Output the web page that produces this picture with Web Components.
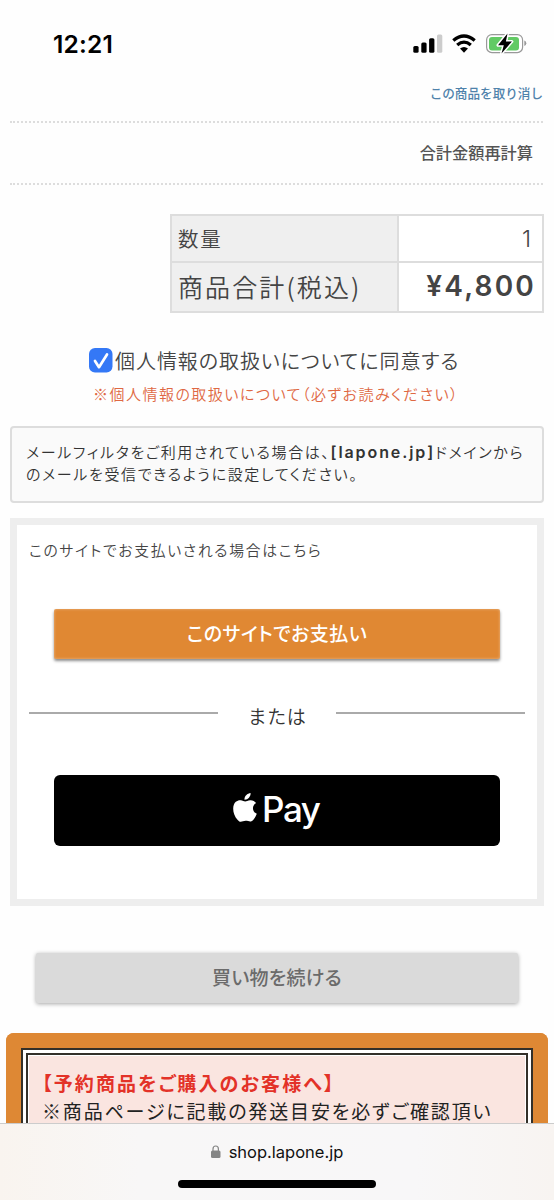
<!DOCTYPE html>
<html lang="ja"><head><meta charset="utf-8"><title>shop.lapone.jp</title>
<style>html,body{margin:0;background:#fefefe}body{font-family:Inter,"Noto Sans CJK JP",sans-serif}</style></head>
<body><checkout-page></checkout-page>
<script>
const define=(name,css,html)=>customElements.define(name,class extends HTMLElement{
  constructor(){super();this.attachShadow({mode:'open'}).innerHTML=`<style>*{box-sizing:border-box}:host{display:block;box-sizing:border-box}${css}</style>${html}`;}
});
define('status-bar',`:host{height:75px;display:flex;align-items:flex-start;justify-content:space-between;padding:29px 27px 0 53px;color:#000}
time{font:600 24.5px/30px Inter,sans-serif;letter-spacing:.2px}svg{display:block;margin-top:2px}`,
`<time>12:21</time><svg width="114" height="26" viewBox="413 31 114 26">
<rect x="413.300" y="46" width="5.300" height="6.700" rx="1.500"/><rect x="421.300" y="42.500" width="5.300" height="10.200" rx="1.500"/><rect x="429.100" y="38.300" width="5.300" height="14.400" rx="1.500"/><rect x="437" y="34.500" width="5.300" height="18.200" rx="1.500" fill="#ccc"/>
<path d="M453.300 40.500Q464 31.500 474.700 40.500M457.200 45Q464 39.300 470.800 45" fill="none" stroke="#000" stroke-width="3.300"/><path d="M460 48.500Q464 45.500 468 48.500L464 52.700Z"/>
<rect x="486.600" y="34.600" width="36" height="18" rx="5.300" fill="#fff" stroke="#999" stroke-width="1.200"/><rect x="489" y="37" width="30" height="13.400" rx="3" fill="#62ca64"/><path d="M524.300 40.600v5.400q2-.7 2-2.700t-2-2.700" fill="#999"/>
<path d="M507.500 33.500 498 45.300h5.800L501.500 53.500 511.900 41.600h-6Z" stroke="#fff" stroke-width="3" paint-order="stroke" stroke-linejoin="round"/></svg>`);
define('cart-actions',`:host{margin:0 11px 0 10px}.c{height:48px;border-bottom:2px dotted #ddd;text-align:right;font:500 12.600px/36px "Noto Sans CJK JP",sans-serif;color:#4f82ab;white-space:nowrap}
.r{height:62px;border-bottom:2px dotted #ddd;text-align:right;padding-right:10px;font:500 16.200px/58px "Noto Sans CJK JP",sans-serif;color:#555}`,
`<div class="c">この商品を取り消し</div><div class="r">合計金額再計算</div>`);
define('totals-table',`:host{margin:29px 10px 0 170px;height:99px;border:2px solid #ddd;display:grid;grid-template-columns:225px 1fr;grid-template-rows:45px 1fr;gap:2px;background:#ddd;color:#444;font:350 20.500px/45px Inter,"Noto Sans CJK JP",sans-serif}
div{background:#fff;padding:0 9px 0 6px}.l{background:#efefef;font-family:"Noto Sans CJK JP",sans-serif;letter-spacing:1.800px}.v{text-align:right}.b{font-size:25px;line-height:46px;letter-spacing:2.100px}.v.b{font:600 28px/47px Inter,sans-serif;letter-spacing:2.200px;padding-right:6px}.one{font-size:23px;padding-right:11px;line-height:47px}`,
`<div class="l">数量</div><div class="v one">1</div><div class="l b">商品合計(税込)</div><div class="v b">¥4,800</div>`);
define('privacy-consent',`:host{display:flex;flex-direction:column;height:113px;padding-top:34px;color:#444;font-family:"Noto Sans CJK JP",sans-serif;font-weight:350}
.a{display:flex;margin-left:89px;gap:2px;height:29px;font-size:20px;line-height:28px;letter-spacing:.950px;font-feature-settings:"palt";white-space:nowrap}svg{flex:none;display:block;margin-top:1px}
.n{margin:6px 0 0 93px;font-size:15px;line-height:24px;letter-spacing:1.480px;color:#df6843;font-feature-settings:"palt";white-space:nowrap}`,
`<div class="a"><svg width="24" height="25"><rect width="23.500" height="24.500" rx="6" fill="#3478f6"/><path d="m6 13 4 6.200L18 6.500" fill="none" stroke="#fff" stroke-width="2.700" stroke-linecap="round" stroke-linejoin="round"/></svg><span>個人情報の取扱いについてに同意する</span></div><div class="n">※個人情報の取扱いについて（必ずお読みください）</div>`);
define('mail-notice',`:host{margin:0 10px 0 10px;height:77px;border:2px solid #ddd;border-radius:4px;background:#fafafa;padding:13px 0 0 14px;font:350 15px/22px "Noto Sans CJK JP",sans-serif;letter-spacing:1.640px;color:#333;font-feature-settings:"palt";white-space:nowrap}
b{font:600 16px/20px Inter,sans-serif;letter-spacing:1.900px}.d{letter-spacing:1.700px}`,
`<div>メールフィルタをご利用されている場合は、<b>[lapone.jp]</b><span class="d">ドメインから</span></div><div>のメールを受信できるように設定してください。</div>`);
define('raised-button',`:host{display:flex;height:50px;align-items:center;justify-content:center;border-radius:2px;font:500 19px/50px "Noto Sans CJK JP",sans-serif;letter-spacing:.45px;background:#e08833;color:#fff;box-shadow:0 2px 3px rgba(0,0,0,.45),inset 0 0 3px rgba(255,255,255,.4);font-feature-settings:"palt"}
:host([muted]){background:#dadada;color:#6b6b6b;letter-spacing:.3px;box-shadow:0 1px 4px rgba(0,0,0,.35)}div{margin-top:-2px}`,`<div><slot></slot></div>`);
define('or-divider',`:host{display:flex;justify-content:space-between;height:24px;color:#333;font:350 19px/24px "Noto Sans CJK JP",sans-serif;letter-spacing:.5px}i{width:189px;height:2px;background:#aaa;margin-top:8px}`,
`<i></i><slot></slot><i></i>`);
define('apple-pay-button',`:host{display:flex;height:71px;border-radius:6px;background:#000;color:#fff;padding:16px 0 0 179px;font:500 35px/36px Inter,sans-serif}svg{margin-top:2px;flex:none}span{margin-left:5px;letter-spacing:-1.400px}`,
`<svg width="24" height="30" viewBox="0 0 24 30" fill="#fff"><path d="M17.600 0c.3 3.500-2.900 6.900-6.100 6.700C11.100 3.200 14.400.3 17.600 0Z"/><path d="M12.200 8.500c1.200 0 3-1.500 5.400-1.300 2.300.1 4.300 1.200 5.400 2.800-4.500 2.900-3.800 8.900.8 10.800-.7 2-2 4.100-3.200 5.700-2.800 3.500-4.700 1.300-8 1.300-3.300 0-5.100 2.400-7.900-.9C-.6 21.300-1.200 12.300 2.800 8.800c1.500-1.300 3.300-1.800 5-1.600 1.600.1 3.200 1.300 4.400 1.300Z"/></svg><span>Pay</span>`);
define('payment-panel',`:host{display:flex;flex-direction:column;margin:15px 10px 0 10px;height:388px;border:7px solid #eee;background:#fff}
p{margin:14px 0 0 12px;font:350 14.800px/22px "Noto Sans CJK JP",sans-serif;letter-spacing:1.700px;color:#444;font-feature-settings:"palt";white-space:nowrap}
raised-button{margin:48px 37px 0}or-divider{margin:45px 12px 0}apple-pay-button{margin:47px 37px 0}`,
`<p>このサイトでお支払いされる場合はこちら</p><raised-button>このサイトでお支払い</raised-button><or-divider>または</or-divider><apple-pay-button></apple-pay-button>`);
define('preorder-notice',`:host{margin:30px 6px 0;height:90px;overflow:hidden;border:solid #de8834;border-width:15px 15px 0;border-radius:8px 8px 0 0}
.o{border:2px solid #333029;border-bottom:0;padding:3px 3px 0;background:#fff}.i{height:90px;border:2px solid #333029;border-bottom:0;box-shadow:inset 0 0 0 1px #fff;background:#fae5e0;padding:14px 0 0 14px;color:#222;font:400 19px/28px "Noto Sans CJK JP",sans-serif;white-space:nowrap;font-feature-settings:"palt"}b{display:block;color:#e33228;font-weight:700;letter-spacing:2.150px}span{letter-spacing:1.850px}`,
`<div class="o"><div class="i"><b>【予約商品をご購入のお客様へ】</b><span>※商品ページに記載の発送目安を必ずご確認頂い</span></div></div>`);
define('browser-bar',`:host{height:77px;display:flex;flex-direction:column;align-items:center;border-top:1px solid #ccc;background:linear-gradient(90deg,#f9f4ef,#f8f7f7 25%,#f8f7f8 75%,#f8f4f1)}
.u{display:flex;align-items:center;height:30px;margin-top:13px;gap:8px;font:400 16.500px/30px Inter,sans-serif;color:#111}svg{display:block}.h{width:198px;height:8px;border-radius:4px;background:#000;margin-top:13px}`,
`<div class="u"><svg width="10" height="14"><rect y="5.500" width="9.500" height="7.500" rx="1.500" fill="#858585"/><path d="M2 6V4a2.700 3 0 0 1 5.400 0v2" fill="none" stroke="#858585" stroke-width="1.200"/></svg><span>shop.lapone.jp</span></div><div class="h"></div>`);
define('checkout-page',`:host{width:554px;height:1200px;display:flex;flex-direction:column;overflow:hidden;background:#fefefe}status-bar,cart-actions,totals-table,privacy-consent,mail-notice,payment-panel,preorder-notice,browser-bar{flex:none}.k{flex:none;margin:47px 36px 0}`,
`<status-bar></status-bar><cart-actions></cart-actions><totals-table></totals-table><privacy-consent></privacy-consent><mail-notice></mail-notice><payment-panel></payment-panel><raised-button muted class="k">買い物を続ける</raised-button><preorder-notice></preorder-notice><browser-bar></browser-bar>`);
</script></body></html>
